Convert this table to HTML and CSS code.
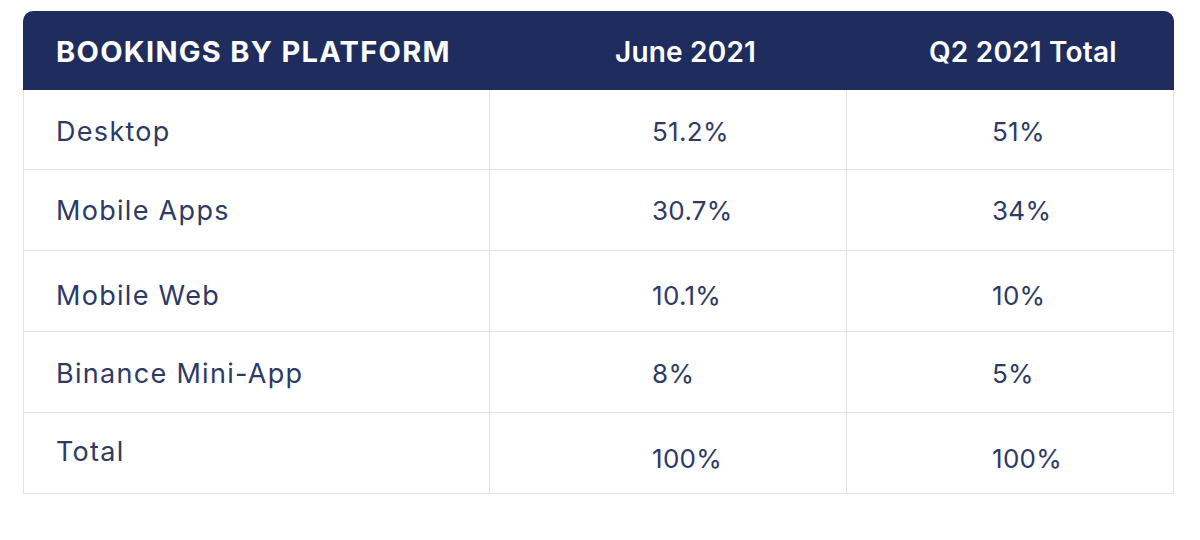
FILE: index.html
```html
<!DOCTYPE html>
<html>
<head>
<meta charset="utf-8">
<link rel="stylesheet" href="styles.css">
</head>
<body>
<div class="table">
  <div class="cell head c1">BOOKINGS BY PLATFORM</div>
  <div class="cell head c2">June 2021</div>
  <div class="cell head c3">Q2 2021 Total</div>

  <div class="cell c1 r1">Desktop</div>
  <div class="cell c2 r1">51.2%</div>
  <div class="cell c3 r1">51%</div>

  <div class="cell c1 r2">Mobile Apps</div>
  <div class="cell c2 r2">30.7%</div>
  <div class="cell c3 r2">34%</div>

  <div class="cell c1 down">Mobile Web</div>
  <div class="cell c2 down">10.1%</div>
  <div class="cell c3 down">10%</div>

  <div class="cell c1">Binance Mini-App</div>
  <div class="cell c2">8%</div>
  <div class="cell c3">5%</div>

  <div class="cell c1 up">Total</div>
  <div class="cell c2 lower">100%</div>
  <div class="cell c3 lower">100%</div>
</div>
</body>
</html>
```
FILE: styles.css
```css
html, body {
  margin: 0;
  padding: 0;
  background: #ffffff;
}
body {
  padding: 11px 0 0 23px;
  font-family: Inter, "Noto Sans", sans-serif;
  color: #2e3a66;
}
.table {
  display: grid;
  grid-template-columns: 467px 357px 327px;
  grid-template-rows: 79px 80px 81px 81px 81px 81px;
  width: 1151px;
  border-radius: 10px 10px 0 0;
  overflow: hidden;
}
.cell {
  display: flex;
  align-items: center;
  box-sizing: border-box;
  border-right: 1px solid #e3e3e6;
  border-bottom: 1px solid #e3e3e6;
  font-size: 26px;
  letter-spacing: 0.3px;
  padding-top: 3px;
}
.cell.c1 {
  border-left: 1px solid #e3e3e6;
  padding-left: 32px;
  font-size: 27px;
  letter-spacing: 1.3px;
}
.cell.c2 { padding-left: 162px; }
.cell.c3 { padding-left: 145px; }
.cell.head {
  background: #1f2d5e;
  color: #ffffff;
  font-weight: 700;
  font-size: 28px;
  border: none;
  letter-spacing: 0.2px;
  padding-top: 2px;
}
.cell.head.c1 { padding-left: 33px; font-size: 29px; letter-spacing: 1.3px; }
.cell.head.c2 { padding-left: 125px; font-weight: 600; }
.cell.head.c3 { padding-left: 82px; font-weight: 600; }
.cell.r2 { padding-top: 0; }
.cell.down { padding-top: 9px; }
.cell.up { padding-top: 0; padding-bottom: 4px; }
.cell.lower { padding-top: 10px; }
```
